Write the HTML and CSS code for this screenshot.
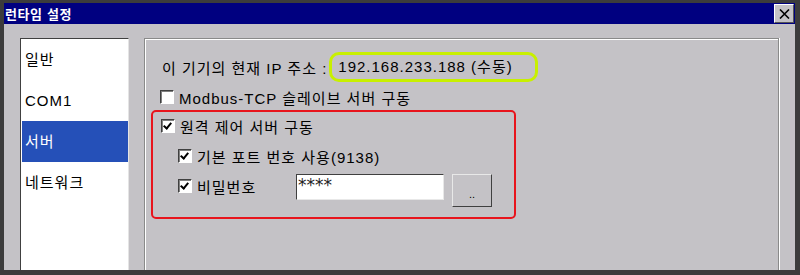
FILE: index.html
```html
<!DOCTYPE html>
<html lang="ko">
  <head>
    <meta charset="utf-8" />
    <title>런타임 설정</title>
    <link rel="stylesheet" href="styles.css">
  </head>
  <body>
    <div class="window">
      <div class="titlebar">
        <span class="title">런타임 설정</span>
        <button class="close" type="button">
          <svg width="11" height="10" viewBox="0 0 11 10">
            <path d="M1 0.5 L10 9.5 M10 0.5 L1 9.5" stroke="#000" stroke-width="1.6" fill="none" />
          </svg>
        </button>
      </div>
      <div class="client">
        <ul class="list">
          <li>일반</li>
          <li>COM1</li>
          <li class="selected">서버</li>
          <li>네트워크</li>
        </ul>
        <div class="panel">
          <div class="ip-row">
            <span>이 기기의 현재 IP 주소 :</span>
            <span class="ip-box">192.168.233.188 (수동)</span>
          </div>
          <label class="check">
            <span class="box"></span>
            <span>Modbus-TCP 슬레이브 서버 구동</span>
          </label>
          <div class="remote">
            <label class="check">
              <span class="box checked"></span>
              <span>원격 제어 서버 구동</span>
            </label>
            <div class="sub">
              <label class="check">
                <span class="box checked"></span>
                <span>기본 포트 번호 사용(9138)</span>
              </label>
              <div class="pw-row">
                <label class="check pw-label">
                  <span class="box checked"></span>
                  <span>비밀번호</span>
                </label>
                <div class="field">****</div>
                <button class="more" type="button">..</button>
              </div>
            </div>
          </div>
        </div>
      </div>
    </div>
  </body>
</html>
```
FILE: styles.css
```css
body {
  margin: 0;
  width: 800px;
  height: 275px;
  overflow: hidden;
  background: #3c3c3c;
  font-family: "Liberation Sans", "Noto Sans CJK KR", sans-serif;
}

.window {
  margin: 3px 5px 0 4px;
  height: 267px;
  display: flex;
  flex-direction: column;
  background: #c4c2c6;
}

.titlebar {
  height: 21px;
  background: #000080;
  display: flex;
  align-items: center;
  justify-content: space-between;
}

.title {
  color: #fff;
  font-weight: bold;
  font-size: 13px;
  letter-spacing: 0.6px;
  padding-left: 1px;
}

.close {
  width: 20px;
  height: 19px;
  margin-right: 1px;
  padding: 0;
  display: flex;
  align-items: center;
  justify-content: center;
  background: #c4c2c6;
  border: 1px solid;
  border-color: #fff #555 #555 #fff;
}

.client {
  flex: 1;
  display: flex;
  gap: 15px;
  padding: 14px 16px 0 16px;
}

.list {
  list-style: none;
  margin: 0;
  padding: 0 0 0 1px;
  width: 106px;
  background: #fff;
  border-left: 1px solid #404040;
  border-top: 1px solid #404040;
  border-right: 1px solid #e4e4e4;
  font-size: 15px;
  letter-spacing: 1px;
  color: #000;
}

.list li {
  height: 41px;
  line-height: 41px;
  padding-left: 3px;
}

.list li.selected {
  background: #2550b8;
  color: #fff;
}

.panel {
  flex: 1;
  border-left: 1px solid #8a8a8a;
  border-top: 1px solid #8a8a8a;
  border-right: 1px solid #8a8a8a;
  box-shadow: inset 1px 1px 0 #fff, 1px 0 0 #fff;
  padding: 13px 0 0 6px;
  font-size: 15px;
  letter-spacing: 1px;
  color: #000;
}

.ip-row {
  display: flex;
  align-items: center;
  gap: 2px;
  padding-left: 11px;
  height: 30px;
}

.ip-box {
  border: 3px solid #c8f000;
  border-radius: 10px;
  padding: 0 22px 0 6px;
  height: 24px;
  line-height: 24px;
}

.check {
  display: flex;
  align-items: center;
  gap: 5px;
  height: 20px;
}

.panel > .check {
  margin-top: 5px;
  padding-left: 9px;
}

.box {
  width: 12px;
  height: 12px;
  background: #fff;
  border: 1px solid;
  border-color: #404040 #fff #fff #404040;
  box-shadow: inset 1px 1px 0 #808080;
  position: relative;
}

.box.checked::after {
  content: "";
  position: absolute;
  left: 3px;
  top: 1px;
  width: 3px;
  height: 6px;
  border: solid #000;
  border-width: 0 2px 2px 0;
  transform: rotate(40deg);
}

.remote {
  margin-top: 3px;
  width: 365px;
  height: 109px;
  border: 2px solid #e8141c;
  border-radius: 5px;
  padding: 4px 0 0 8px;
  box-sizing: border-box;
}

.sub {
  padding: 10px 0 0 17px;
}

.sub > .check {
  margin-bottom: 8px;
}

.pw-row {
  display: flex;
  align-items: flex-start;
}

.pw-label {
  width: 118px;
  margin-top: 2px;
}

.field {
  width: 145px;
  height: 24px;
  background: #fff;
  border: 1px solid;
  border-color: #404040 #e8e8e8 #e8e8e8 #404040;
  font-family: "DejaVu Sans", sans-serif;
  font-size: 17px;
  line-height: 20px;
  letter-spacing: 0;
  padding-left: 1px;
  color: #222;
}

.more {
  margin-left: 8px;
  width: 40px;
  height: 33px;
  padding: 0;
  background: #c4c2c6;
  border: 1px solid;
  border-color: #e8e8e8 #404040 #404040 #e8e8e8;
  font-size: 11px;
  padding-top: 6px;
  color: #000;
}
```
